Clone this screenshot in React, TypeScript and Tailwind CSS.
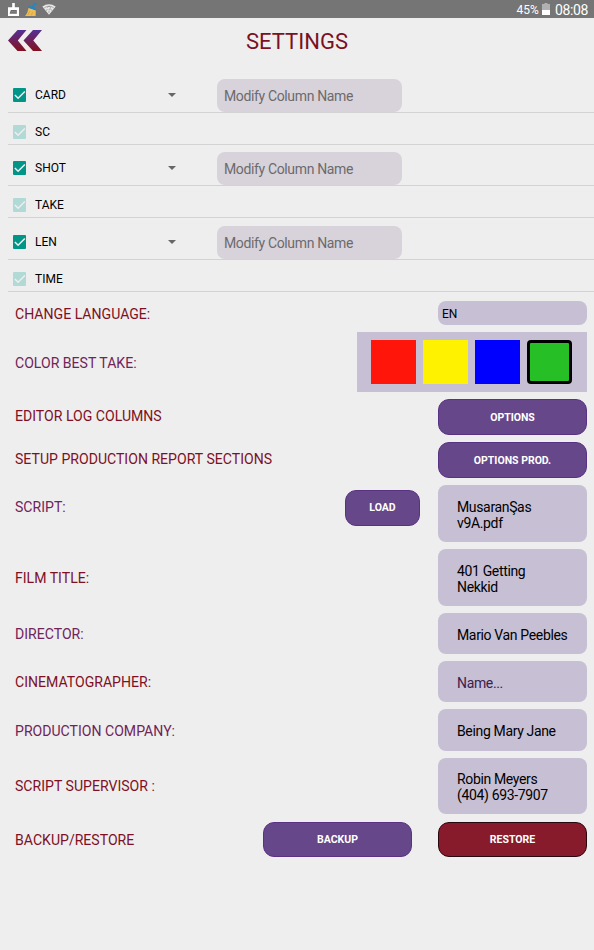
import { FC, ReactNode, useState } from "react";
import clsx from "clsx";

interface ColumnType {
    name: string;
    editable: boolean;
    height: string;
}

interface SettingRowType {
    title: string;
    className: string;
    muted?: boolean;
    labelClass?: string;
    children: ReactNode;
}

const columns: ColumnType[] = [
    { name: 'CARD', editable: true, height: 'h-[42px]' },
    { name: 'SC', editable: false, height: 'h-8' },
    { name: 'SHOT', editable: true, height: 'h-[41px]' },
    { name: 'TAKE', editable: false, height: 'h-8' },
    { name: 'LEN', editable: true, height: 'h-[42px]' },
    { name: 'TIME', editable: false, height: 'h-8' }
];

const swatches = [
    { id: 'red', color: 'bg-[#ff150a]' },
    { id: 'yellow', color: 'bg-[#fff200]' },
    { id: 'blue', color: 'bg-[#0000ff]' },
    { id: 'green', color: 'bg-[#26bf26]' }
];

const StatusBar = () => {
    return (
        <div className="flex h-[18px] items-center bg-[#757575] text-white">
            <svg className="ml-[7px] h-[14px] w-[13px]" viewBox="0 0 13 14" aria-hidden="true">
                <path fill="#fff" d="M5.200 1h2.600v4.200H12V14H1V5.200h4.200z" />
                <path fill="#6b6b6b" d="M3.800 8h6v3.800H2.600z" />
                <path stroke="#999" strokeWidth=".7" d="M3.400 9.800h6" />
            </svg>
            <svg className="ml-[4px] h-[14px] w-[14px]" viewBox="0 0 14 14" aria-hidden="true">
                <path fill="#edbd54" d="m4.500 6 7.300 2-.2 6H1c1.800-1.500 2.800-4.500 3.500-8z" />
                <path stroke="#c88d2d" strokeWidth=".5" d="m5.500 9-1.500 4M8.500 10l-1 3.500" />
                <path fill="#2486c4" d="m4.800 3.400 7.600 3.200-.7 1.900-7.500-2.900z" />
                <path fill="none" stroke="#2486c4" strokeWidth="2" d="m8.800 5.200 1.700-3.400 2 .2" />
            </svg>
            <svg className="ml-[4px] h-[12px] w-[14px]" viewBox="0 0 14 12" aria-hidden="true">
                <path fill="#e8e8e8" d="M.3 3.600C4.300.3 9.700.3 13.700 3.600L7 11.700z" />
                <path fill="none" stroke="#858585" strokeWidth=".7" d="M2.200 5c3-2.300 6.600-2.300 9.600 0M5.500 4.600c.3-1.800 3.200-1.500 2.900.3C8.200 6 7 6 7 7.500M4 7.300l1.500-.8M10 7.300l-1.500-.8" />
                <path fill="#777" d="M6.500 8.500h1v1h-1z" />
            </svg>
            <div className="ml-auto flex items-center pr-[6px]">
                <span className="mt-px text-[12px] leading-[18px]">45%</span>
                <svg className="ml-[3px] h-3 w-2" viewBox="0 0 8 12" aria-hidden="true">
                    <path fill="#b1b1b1" d="M2.500 0h3v1H8v6H0V1h2.500z" />
                    <path fill="#fff" d="M0 7h8v5H0z" />
                </svg>
                <span className="ml-[5px] mt-[2px] text-[14px] leading-[18px] tracking-[-0.35px]">08:08</span>
            </div>
        </div>
    )
}

const Header = () => {
    return (
        <div className="relative flex h-[53px] justify-center">
            <svg className="absolute left-2 top-3 h-[21px] w-[34px]" viewBox="0 0 34 21" aria-hidden="true">
                <defs>
                    <linearGradient id="back" x1="0" y1="0" x2="0" y2="1">
                        <stop offset="0" stopColor="#553096" />
                        <stop offset="1" stopColor="#85101c" />
                    </linearGradient>
                </defs>
                <path fill="url(#back)" d="M9.500 0h9L9.800 10.500 18.500 21h-9L0 10.500zM25 0h9l-8.700 10.500L34 21h-9l-9.500-10.500z" />
            </svg>
            <h1 className="mt-[11px] text-[22px] leading-[26px] text-[#7b1022]">SETTINGS</h1>
        </div>
    )
}

const ColumnRow: FC<ColumnType> = ({name, editable, height}) => {
    const   [checked, setChecked] = useState(true);

    return (
        <div className={clsx("ml-2 flex items-end border-b border-[#d2d2d2]", height)}>
            <button
                className={clsx(
                    "ml-[4.500px] size-[13.500px] rounded-[1px]",
                    editable ? "mb-[10.500px]" : "mb-[5.500px]",
                    editable ? "bg-[#009587]" : "bg-[#b1d9d5]"
                )}
                disabled={!editable}
                onClick={() => setChecked(!checked)}
            >
                {checked && (
                    <svg className="size-[13.500px]" viewBox="0 0 13 13" fill="none" aria-hidden="true">
                        <path stroke="#eee" strokeWidth="1.500" d="m1.800 6.700 3.100 3.100 6.500-6.500" />
                    </svg>
                )}
            </button>
            <span className={clsx("ml-[9px] w-[133px] text-[12px] leading-[14px] text-black", editable ? "mb-[10px]" : "mb-[5px]")}>{name}</span>
            {editable && (
                <>
                    <svg className="mb-[15px] h-1 w-2" viewBox="0 0 8 4" aria-hidden="true">
                        <path fill="#666" d="M0 0h8L4 4z" />
                    </svg>
                    <input
                        type="text"
                        placeholder="Modify Column Name"
                        className="ml-[41px] h-[33px] w-[185px] rounded-lg bg-[#d8d3da] px-[7px] pt-px text-[14px] tracking-[-0.36px] outline-none placeholder:text-[#6c6a6d]"
                    />
                </>
            )}
        </div>
    )
}

const SettingRow: FC<SettingRowType> = ({title, className, muted, labelClass, children}) => {
    return (
        <div className={clsx("flex items-center pl-[15px] pr-[7px]", className)}>
            <span className={clsx("mr-auto text-[14.080px] leading-4 whitespace-nowrap", muted ? "text-[#702459]" : "text-[#7d1024]", labelClass)}>{title}</span>
            {children}
        </div>
    )
}

const ActionButton = ({title, className}: {title: string, className?: string}) => {
    return (
        <button className={clsx("rounded-[11px] border pt-px text-[10.500px] font-bold text-white", className)}>
            {title}
        </button>
    )
}

const ValueBox = ({children, placeholder}: {children: ReactNode, placeholder?: boolean}) => {
    return (
        <div className={clsx(
            "flex h-full w-[149px] items-center rounded-lg bg-[#c7bfd4] pl-[19px] pt-[2px] text-[14px] leading-4 tracking-[-0.35px] whitespace-pre-line",
            placeholder ? "text-[#3c214d]" : "text-black"
        )}>
            {children}
        </div>
    )
}

const App = () => {
    const   [bestTake, setBestTake] = useState('green');

    return (
        <div className="min-h-screen w-[594px] bg-[#eeeeee] font-['Roboto',sans-serif]">
            <StatusBar />
            <Header />
            {columns.map((column) => <ColumnRow key={column.name} {...column} />)}

            <SettingRow title="CHANGE LANGUAGE:" className="mt-[9px] h-6" labelClass="mt-[2px]">
                <div className="h-6 w-[149px] rounded-lg bg-[#c7bfd4] pl-1 pt-px text-[12px] leading-6 text-black">EN</div>
            </SettingRow>
            <SettingRow title="COLOR BEST TAKE:" muted className="mt-[7px] h-[60px]" labelClass="mt-[2px]">
                <div className="flex h-[60px] w-[230px] items-center gap-[7px] bg-[#c7bfd4] pl-[14px]">
                    {swatches.map(({id, color}) => (
                        <button
                            key={id}
                            aria-label={id}
                            className={clsx("h-11 w-[45px]", color, bestTake === id && "rounded-[4px] border-[3px] border-black")}
                            onClick={() => setBestTake(id)}
                        />
                    ))}
                </div>
            </SettingRow>
            <SettingRow title="EDITOR LOG COLUMNS" className="mt-[7px] h-9" labelClass="mb-[2px]">
                <ActionButton title="OPTIONS" className="h-9 w-[149px] border-[#593284] bg-[#664789]" />
            </SettingRow>
            <SettingRow title="SETUP PRODUCTION REPORT SECTIONS" className="mt-[7px] h-9" labelClass="mb-[2px]">
                <ActionButton title="OPTIONS PROD." className="h-9 w-[149px] border-[#593284] bg-[#664789]" />
            </SettingRow>
            <SettingRow title="SCRIPT:" muted className="mt-[7px] h-[57px]" labelClass="mb-[14px]">
                <ActionButton title="LOAD" className="mr-[18px] mb-[12px] h-9 w-[75px] border-[#593284] bg-[#664789]" />
                <ValueBox>{'MusaranŞas\nv9A.pdf'}</ValueBox>
            </SettingRow>
            <SettingRow title="FILM TITLE:" className="mt-[7px] h-[57px]">
                <ValueBox>{'401 Getting\nNekkid'}</ValueBox>
            </SettingRow>
            <SettingRow title="DIRECTOR:" muted className="mt-[7px] h-[41px]">
                <ValueBox>Mario Van Peebles</ValueBox>
            </SettingRow>
            <SettingRow title="CINEMATOGRAPHER:" className="mt-[7px] h-[41px]" labelClass="mt-px">
                <ValueBox placeholder>Name...</ValueBox>
            </SettingRow>
            <SettingRow title="PRODUCTION COMPANY:" muted className="mt-[7px] h-[42px]" labelClass="mt-px">
                <ValueBox>Being Mary Jane</ValueBox>
            </SettingRow>
            <SettingRow title="SCRIPT SUPERVISOR :" className="mt-[7px] h-[56px]">
                <ValueBox>{'Robin Meyers\n(404) 693-7907'}</ValueBox>
            </SettingRow>
            <SettingRow title="BACKUP/RESTORE" className="mt-2 h-[35px]">
                <ActionButton title="BACKUP" className="mr-[26px] h-[35px] w-[149px] border-[#593284] bg-[#664789]" />
                <ActionButton title="RESTORE" className="h-[35px] w-[149px] border-[#2a070f] bg-[#871a2b]" />
            </SettingRow>
        </div>
    )
}


export default App;
